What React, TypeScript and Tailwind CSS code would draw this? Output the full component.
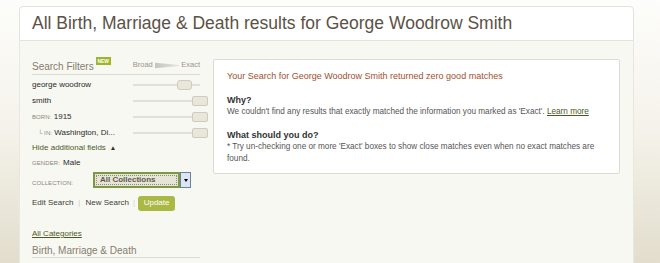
import React from "react";

const Slider = ({ pos }: { pos: "mid" | "end" }) => (
  <div className="relative w-[75px] h-[16px] shrink-0">
    <div className="absolute left-0 w-[67px] top-[7px] h-[2px] bg-[#e0dfd8]" />
    {pos === "mid" ? (
      <div className="absolute left-[44px] top-[3px] w-[15px] h-[10px] rounded-[3px] bg-[#e9e7dc] border border-[#cfccbc]" />
    ) : (
      <div className="absolute left-[59px] top-[3px] w-[16px] h-[10px] rounded-[2px] bg-[#e9e7dc] border border-[#cfccbc]" />
    )}
  </div>
);

const Label = ({ children }: { children: React.ReactNode }) => (
  <span className="text-[6px] text-[#8a8578] tracking-[0.1px]">{children}</span>
);

export default function App() {
  const font = { fontFamily: '"Liberation Sans", Arial, sans-serif' };
  return (
    <div
      className="w-[660px] h-[263px] overflow-hidden bg-gradient-to-b from-[#fdfdfb] via-[#f4f2ea] to-[#e2ddcc] pt-[6px]"
      style={font}
    >
      <div className="ml-[19px] w-[615px] h-[257px] flex flex-col">
        <div className="h-[35px] shrink-0 bg-white border border-[#e3e2dc] rounded-t-[4px] px-[12px] flex items-center text-[17.5px] text-[#5b5246] whitespace-nowrap">
          All Birth, Marriage &amp; Death results for George Woodrow Smith
        </div>
        <div className="flex-1 bg-[#f8f8f3] border-x border-[#e8e7e0] flex pl-[12px] pt-[15px] whitespace-nowrap">
          <div className="w-[176px] shrink-0 flex flex-col">
            <div className="w-[168px] h-[19px] border-b border-[#dcdbd4] flex items-end">
              <span className="text-[10px] text-[#857c6c] leading-[10px] mb-[2px]">Search Filters</span>
              <span className="self-start mt-[1px] ml-[2px] w-[16px] h-[8px] bg-[#9db52a] text-white text-[5px] leading-[8px] text-center font-bold">
                NEW
              </span>
              <span className="ml-[22px] text-[7.5px] text-[#9a9486] leading-[8px] mb-[5px]">Broad</span>
              <svg width="26" height="7" className="mb-[5px] mx-[2px]" viewBox="0 0 26 7">
                <defs>
                  <linearGradient id="wg" x1="0" x2="1">
                    <stop offset="0" stopColor="#c6c4bc" />
                    <stop offset="1" stopColor="#e6e5e0" />
                  </linearGradient>
                </defs>
                <polygon points="0,0.5 26,3 26,4 0,6.5" fill="url(#wg)" />
              </svg>
              <span className="text-[7.5px] text-[#9a9486] leading-[8px] mb-[5px]">Exact</span>
            </div>
            <div className="mt-[2px] h-[16px] flex items-center justify-between text-[8px] text-[#2a2a2a]">
              <span>george woodrow</span>
              <Slider pos="mid" />
            </div>
            <div className="h-[16px] flex items-center justify-between text-[8px] text-[#2a2a2a]">
              <span>smith</span>
              <Slider pos="end" />
            </div>
            <div className="h-[16px] flex items-center justify-between text-[8px] text-[#2a2a2a]">
              <span>
                <Label>BORN:</Label> 1915
              </span>
              <Slider pos="end" />
            </div>
            <div className="h-[16px] flex items-center justify-between text-[8px] text-[#2a2a2a]">
              <span className="pl-[6px]">
                <Label>└ IN:</Label> Washington, Di...
              </span>
              <Slider pos="end" />
            </div>
            <div className="h-[14px] flex items-center text-[8px] text-[#4b5a1e]">
              Hide additional fields <span className="ml-[4px] text-[6.5px] text-[#2e3510]">▲</span>
            </div>
            <div className="h-[16px] flex items-center text-[8px] text-[#2a2a2a]">
              <Label>GENDER:</Label>
              <span className="ml-[3px]">Male</span>
            </div>
            <div className="h-[18px] flex items-center">
              <span className="w-[61px]">
                <Label>COLLECTION:</Label>
              </span>
              <div className="flex h-[16px]">
                <div className="w-[87px] h-[16px] border-2 border-[#7f9645] bg-[#e5e4d5] flex items-center">
                  <div className="ml-[1px] w-[81px] h-[10px] border border-dotted border-[#8e8d80] flex items-center pl-[3px] text-[8px] font-bold text-[#5d5a4c]">
                    All Collections
                  </div>
                </div>
                <div className="w-[11px] h-[16px] bg-[#dbe6f3] border border-[#6c7fa0] flex items-center justify-center">
                  <span className="block w-0 h-0 border-x-[2.5px] border-x-transparent border-t-[3px] border-t-black" />
                </div>
              </div>
            </div>
            <div className="mt-[6px] h-[16px] flex items-center text-[8px] text-[#3e3e36]">
              <span>Edit Search</span>
              <span className="mx-[5px] text-[#d0cfc6]">|</span>
              <span>New Search</span>
              <span className="ml-[4px] mr-[3px] text-[#d0cfc6]">|</span>
              <span className="w-[37px] h-[15px] rounded-[3px] bg-[#a9b944] text-white text-[8px] flex items-center justify-center">
                Update
              </span>
            </div>
            <div className="mt-[16px] h-[14px] flex items-center text-[8px] text-[#4b5a1e] underline">
              All Categories
            </div>
            <div className="w-[168px] h-[17px] border-b border-[#dcdbd4] flex items-end">
              <span className="text-[10px] text-[#857c6c] leading-[10px] mb-[1px]">Birth, Marriage &amp; Death</span>
            </div>
          </div>
          <div className="ml-[5px] mt-[3px] w-[407px] h-[115px] bg-white border border-[#dddcd4] rounded-[2px] pl-[13px] pt-[10px] whitespace-normal">
            <div className="text-[9px] text-[#a2502f] leading-[12px]">
              Your Search for George Woodrow Smith returned zero good matches
            </div>
            <div className="mt-[12px] text-[9px] font-bold text-[#333] leading-[12px]">Why?</div>
            <div className="text-[8.2px] text-[#555] leading-[12px]">
              We couldn't find any results that exactly matched the information you marked as 'Exact'.{" "}
              <span className="underline text-[#4b5a1e]">Learn more</span>
            </div>
            <div className="mt-[11px] text-[9px] font-bold text-[#333] leading-[12px]">What should you do?</div>
            <div className="text-[8.2px] text-[#555] leading-[12px] w-[378px]">
              * Try un-checking one or more 'Exact' boxes to show close matches even when no exact matches are found.
            </div>
          </div>
        </div>
      </div>
    </div>
  );
}
